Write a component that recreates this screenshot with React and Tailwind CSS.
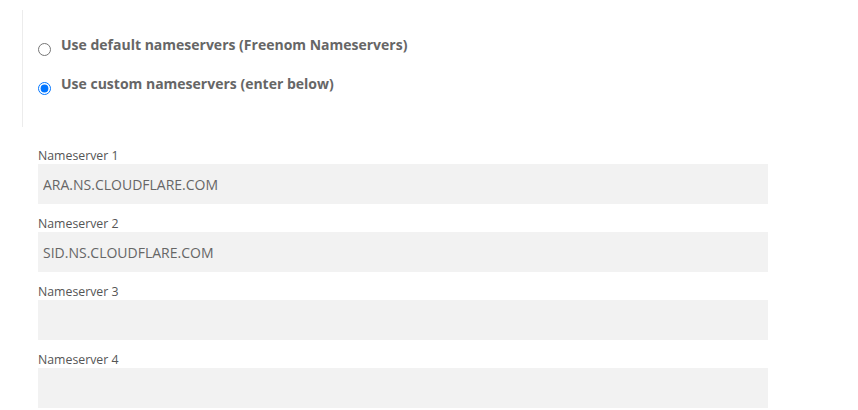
export default function App() {
  const servers = [
    { label: 'Nameserver 1', value: 'ARA.NS.CLOUDFLARE.COM' },
    { label: 'Nameserver 2', value: 'SID.NS.CLOUDFLARE.COM' },
    { label: 'Nameserver 3', value: '' },
    { label: 'Nameserver 4', value: '' },
  ];

  return (
    <div className="min-h-screen bg-white" style={{ fontFamily: '"Open Sans", sans-serif' }}>
      {/* Nameserver choice */}
      <div className="pt-[10px] pl-[22px]">
        <div className="h-[117px] border-l border-[#ececec] pl-[15px] pt-[25px] flex flex-col gap-[19px]">
          <label className="flex items-start gap-[10px] h-[20px]">
            <input type="radio" name="ns" className="m-0 mt-[8px] w-[13px] h-[13px]" />
            <span className="text-[14px] leading-[20px] font-bold text-[#666]">
              Use default nameservers (Freenom Nameservers)
            </span>
          </label>
          <label className="flex items-start gap-[10px] h-[20px]">
            <input type="radio" name="ns" defaultChecked className="m-0 mt-[8px] w-[13px] h-[13px]" />
            <span className="text-[14px] leading-[20px] font-bold text-[#666]">
              Use custom nameservers (enter below)
            </span>
          </label>
        </div>
      </div>

      {/* Nameserver fields */}
      <div className="mt-[21px] pl-[38px] flex flex-col gap-[12px]">
        {servers.map(({ label, value }) => (
          <div key={label} className="w-[730px]">
            <div className="text-[12.3px] leading-[16px] text-[#555]">{label}</div>
            <input
              type="text"
              defaultValue={value}
              className="block w-full h-[40px] bg-[#f2f2f2] px-[5px] text-[14px] text-[#666] outline-none"
            />
          </div>
        ))}
      </div>
    </div>
  );
}
